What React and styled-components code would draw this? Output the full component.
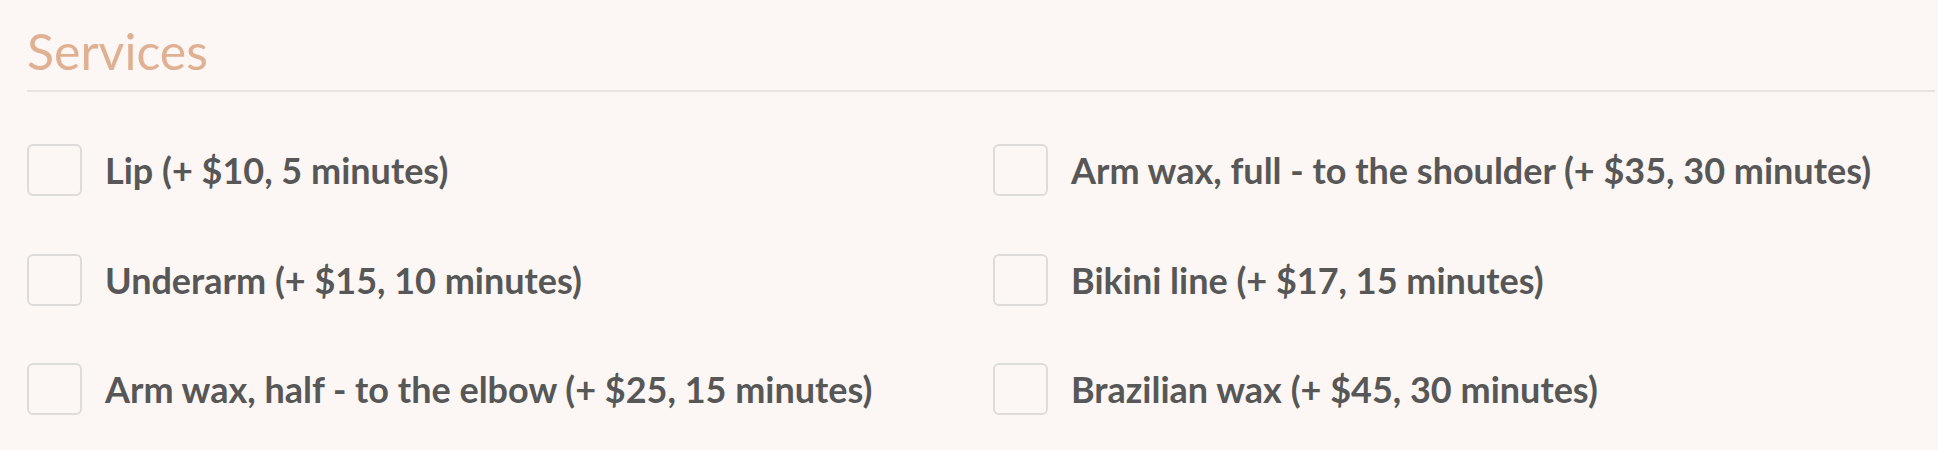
import React from "react";
import styled, { createGlobalStyle } from "styled-components";

const GlobalStyle = createGlobalStyle`
  body {
    margin: 0;
    background: #fcf7f4;
    font-family: "Lato", "Open Sans", sans-serif;
  }
`;

const services = [
  "Lip (+ $10, 5 minutes)",
  "Arm wax, full - to the shoulder (+ $35, 30 minutes)",
  "Underarm (+ $15, 10 minutes)",
  "Bikini line (+ $17, 15 minutes)",
  "Arm wax, half - to the elbow (+ $25, 15 minutes)",
  "Brazilian wax (+ $45, 30 minutes)",
];

function App() {
  return (
    <Wrapper>
      <GlobalStyle />
      <Title>Services</Title>
      <Grid>
        {services.map((s) => (
          <Option key={s}>
            <Box type="checkbox" />
            <span>{s}</span>
          </Option>
        ))}
      </Grid>
    </Wrapper>
  );
}

const Wrapper = styled.div`
  padding: 0 3px 0 27px;
`;

const Title = styled.h2`
  margin: 0;
  height: 92px;
  box-sizing: border-box;
  padding-top: 26px;
  font-size: 50px;
  line-height: 1;
  font-weight: 400;
  color: #e0b093;
  border-bottom: 2px solid #e6e3e2;
`;

const Grid = styled.div`
  display: grid;
  grid-template-columns: 1fr 1fr;
  column-gap: 24px;
  row-gap: 57.5px;
  padding-top: 52px;
`;

const Option = styled.label`
  display: flex;
  align-items: center;
  gap: 23px;
  font-size: 36px;
  font-weight: 700;
  color: #575757;
`;

const Box = styled.input`
  appearance: none;
  margin: 0;
  width: 55px;
  height: 52px;
  box-sizing: border-box;
  border: 2px solid #dedcdb;
  border-radius: 6px;
  background: transparent;
  flex-shrink: 0;
`;

export default App;
